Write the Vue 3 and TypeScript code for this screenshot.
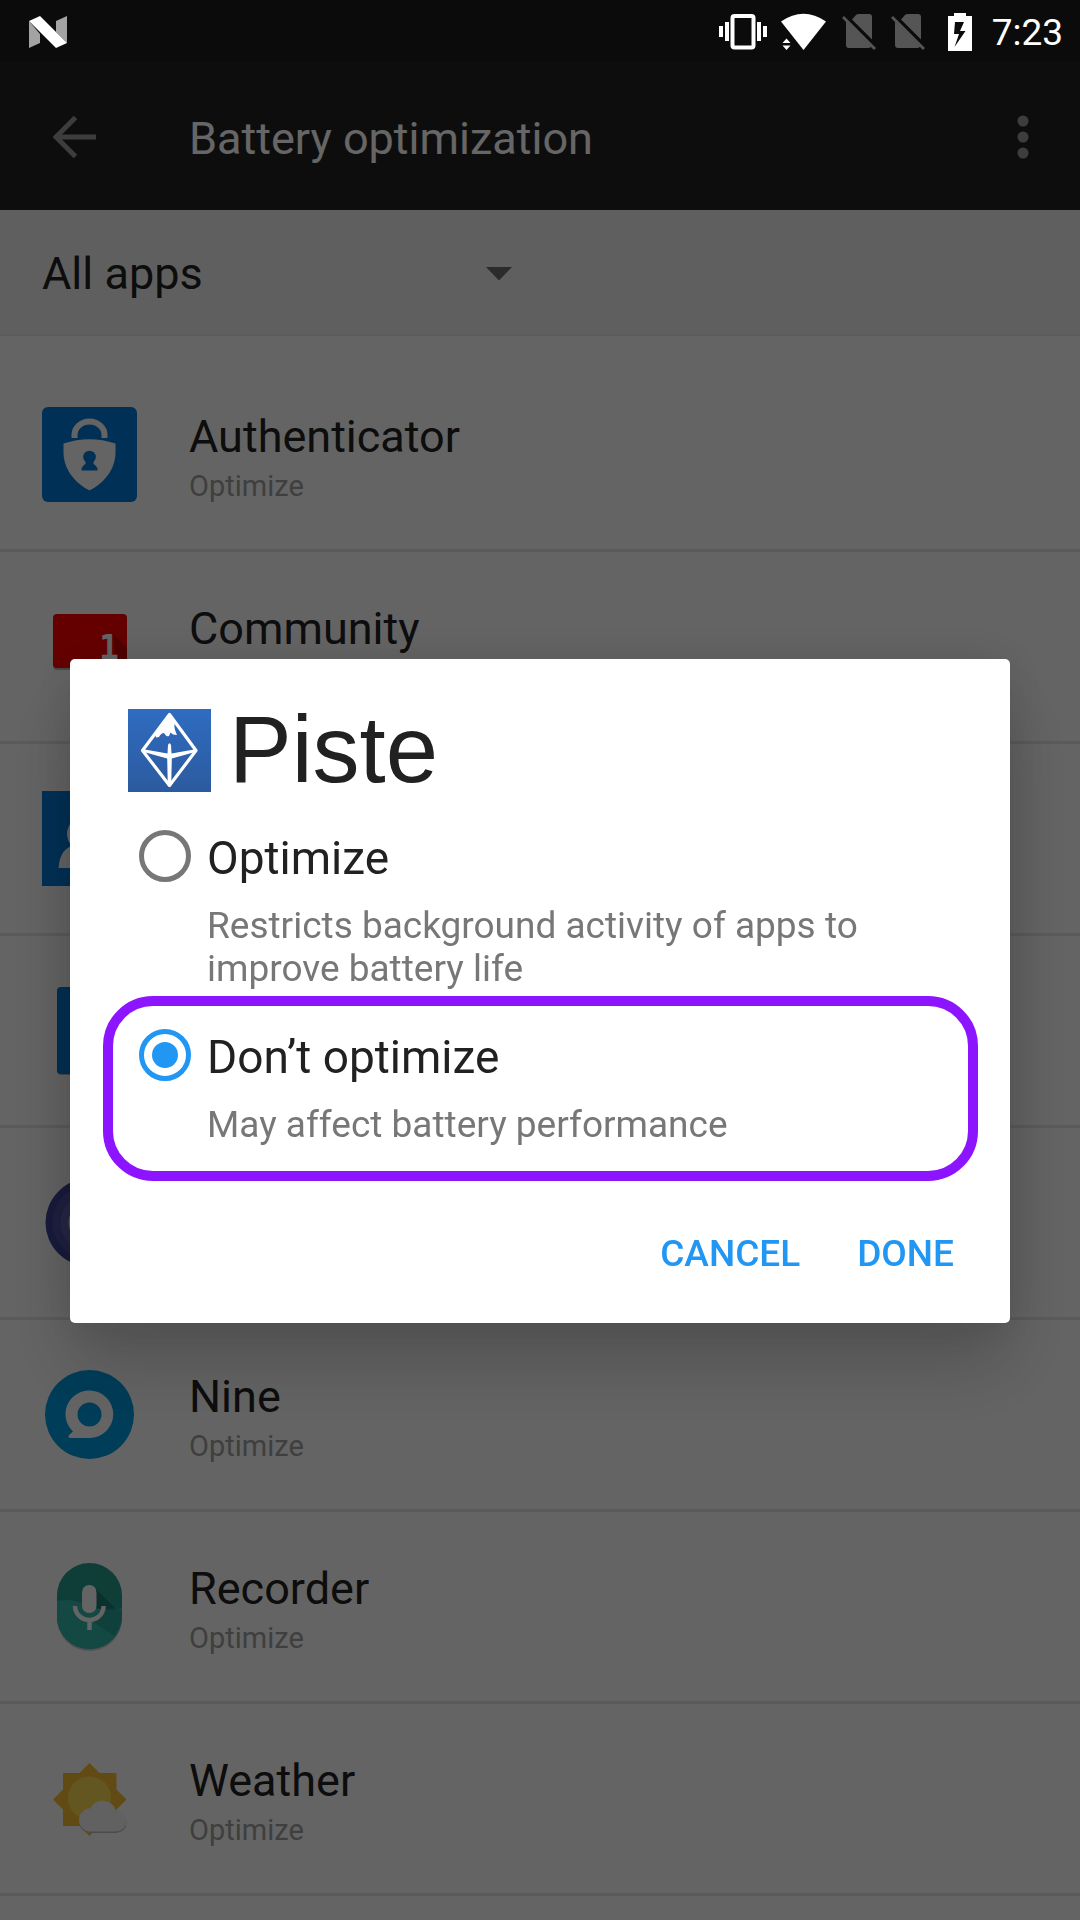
<script setup lang="ts">
import { ref } from 'vue'

interface AppRow {
  icon: string
  name?: string
  status?: string
}

interface Choice {
  value: string
  label: string
  description: string
  highlighted: boolean
}

const apps: AppRow[] = [
  { icon: 'authenticator', name: 'Authenticator', status: 'Optimize' },
  { icon: 'community', name: 'Community' },
  { icon: 'contacts' },
  { icon: 'document' },
  { icon: 'lens' },
  { icon: 'nine', name: 'Nine', status: 'Optimize' },
  { icon: 'recorder', name: 'Recorder', status: 'Optimize' },
  { icon: 'weather', name: 'Weather', status: 'Optimize' },
]

const choices: Choice[] = [
  {
    value: 'optimize',
    label: 'Optimize',
    description: 'Restricts background activity of apps to improve battery life',
    highlighted: false,
  },
  {
    value: 'dont-optimize',
    label: 'Don’t optimize',
    description: 'May affect battery performance',
    highlighted: true,
  },
]

const filter = ref('all')
const selected = ref('dont-optimize')
</script>

<template>
  <div class="screen">
    <div class="status-bar">
      <svg class="nougat" width="40" height="34" viewBox="0 0 40 34" aria-hidden="true">
        <path d="M1 6L12 19V28L1 33Z" fill="#a3a3a3" />
        <path d="M39 1V28L28 17V6Z" fill="#a3a3a3" />
        <path d="M1 6L12 1L39 28L28 33Z" fill="#fff" />
      </svg>
      <div class="status-icons">
        <svg width="48" height="38" viewBox="0 0 48 38" aria-hidden="true">
          <rect x="13.5" y="3" width="21" height="31.5" rx="2" fill="none" stroke="#fff" stroke-width="4" />
          <path d="M0 13h4v11H0zM6 9h4v19H6zM38 9h4v19h-4zM44 13h4v11h-4z" fill="#fff" />
        </svg>
        <svg class="wifi" width="46" height="38" viewBox="0 0 46 38" aria-hidden="true">
          <path d="M0 8.5Q22.5 -7 45 8.5L22.5 37Z" fill="#fff" />
          <path d="M1.5 30L5.5 25.5L9.5 30ZM1.5 32.5L5.5 37L9.5 32.5Z" fill="#fff" />
        </svg>
        <svg v-for="n in 2" :key="n" class="sim" width="34" height="38" viewBox="0 0 34 38" aria-hidden="true">
          <path d="M10 6.5L14 2Q15 1 17 1H27Q30 1 30 4V26.5ZM4 8L29 33.5Q28.5 35 26 35H7Q4 35 4 32Z" fill="#555" />
          <path d="M1 4L33 36" stroke="#555" stroke-width="3" />
        </svg>
        <svg class="battery" width="24" height="38" viewBox="0 0 24 38" aria-hidden="true">
          <path
            d="M6 0H18V3H24V38H0V3H6ZM7 9L6 21H11L6.5 34L17.5 18H12L16 9Z"
            fill="#fff"
            fill-rule="evenodd"
          />
        </svg>
        <time class="clock">7:23</time>
      </div>
    </div>

    <header class="toolbar">
      <button class="icon-button" type="button" aria-label="Back">
        <svg width="44" height="42" viewBox="0 0 44 42" aria-hidden="true">
          <path d="M43 21H4M22.5 1.5L3 21L22.5 40.5" fill="none" stroke="#999" stroke-width="5" />
        </svg>
      </button>
      <h1 class="toolbar-title">Battery optimization</h1>
      <button class="icon-button" type="button" aria-label="More options">
        <svg width="12" height="44" viewBox="0 0 12 44" aria-hidden="true">
          <circle cx="6" cy="6" r="5.5" fill="#999" />
          <circle cx="6" cy="22" r="5.5" fill="#999" />
          <circle cx="6" cy="38" r="5.5" fill="#999" />
        </svg>
      </button>
    </header>

    <div class="filter-bar">
      <div class="filter">
        <select v-model="filter" class="filter-select" aria-label="Apps shown">
          <option value="all">All apps</option>
        </select>
        <svg class="filter-caret" width="26" height="14" viewBox="0 0 26 14" aria-hidden="true">
          <path d="M0 0H26L13 13.5Z" fill="#6c6c6c" />
        </svg>
      </div>
    </div>

    <ul class="apps">
      <li v-for="app in apps" :key="app.icon" class="app">
        <svg class="app-icon" viewBox="0 0 95 95" aria-hidden="true">
          <g v-if="app.icon === 'authenticator'">
            <rect width="95" height="95" rx="6" fill="#0078d7" />
            <path d="M32.5 31V28A15 13.5 0 0 1 62.5 28V31" fill="none" stroke="#fafafa" stroke-width="6" />
            <path d="M21.5 36.5Q47.5 28 73.5 36.5V46C73 63 62 76 47.5 83.5C33 76 22 63 21.5 46Z" fill="#fafafa" />
            <circle cx="47.5" cy="50" r="6.3" fill="#0078d7" />
            <path d="M44 54H51Q51 57 53.5 58.5Q55.5 60 55.5 63.5H39.5Q39.5 60 41.5 58.5Q44 57 44 54Z" fill="#0078d7" />
          </g>
          <g v-else-if="app.icon === 'community'">
            <rect x="11" y="17" width="74" height="54" rx="4" fill="#b4b4b4" />
            <rect x="11" y="15" width="74" height="54" rx="4" fill="#fa0000" />
            <path d="M71 35L85 49V69H75Z" fill="#c40000" />
            <text x="57" y="60" class="one">1</text>
          </g>
          <g v-else-if="app.icon === 'contacts'">
            <rect width="95" height="95" fill="#0078d7" />
            <circle cx="42" cy="43" r="17" fill="#fafafa" />
            <path d="M16.5 77Q18 56 34 54H50Q66 56 68 77Z" fill="#fafafa" />
          </g>
          <g v-else-if="app.icon === 'document'">
            <rect x="15" y="5" width="65" height="87" rx="4" fill="#b4b4b4" />
            <rect x="15" y="4" width="65" height="87" rx="4" fill="#0078d0" />
          </g>
          <g v-else-if="app.icon === 'lens'">
            <circle cx="47.5" cy="47.5" r="44" fill="#3c4296" />
            <circle cx="47.5" cy="47.5" r="37" fill="#4a50a0" />
            <circle cx="47.5" cy="47.5" r="29" fill="#5c61ab" />
            <circle cx="47.5" cy="47.5" r="21" fill="#ddd" />
          </g>
          <g v-else-if="app.icon === 'nine'">
            <circle cx="47.5" cy="47.5" r="44.5" fill="#0098dc" />
            <path
              d="M47.5 23.5A23.7 23.7 0 0 1 47.5 71H28.5Q25.5 70.5 27 68L31 64.5A23.7 23.7 0 0 1 47.5 23.5Z"
              fill="#fafafa"
            />
            <circle cx="47.5" cy="47.5" r="12" fill="#0098dc" />
          </g>
          <g v-else-if="app.icon === 'recorder'">
            <rect x="15" y="5" width="65" height="87" rx="32.5" fill="#c8c8c8" />
            <rect x="15" y="4" width="65" height="86" rx="32.5" fill="#269b8e" />
            <path d="M15 42Q28 39 42 45Q60 54 80 49V57.5A32.5 32.5 0 0 1 15 57.5Z" fill="#30b5a8" />
            <path d="M54 30L73 49Q64 51 54 49Z" fill="#1b7a70" />
            <path d="M60 49H73L80 52Q80 66 72 77L50 62Z" fill="#1e8278" opacity="0.4" />
            <rect x="40" y="26" width="14.5" height="28" rx="7.2" fill="#fafafa" />
            <path d="M33 47A14.3 14 0 0 0 61.6 47M47.5 61V71" fill="none" stroke="#fafafa" stroke-width="4.5" />
          </g>
          <g v-else>
            <path
              d="M47.5 12L57.5 22H74.5V38.5L84.5 48.5L74.5 58.5V75H57.5L47.5 85L37.5 75H21V58.5L11 48.5L21 38.5V22H37.5Z"
              fill="#f5ba35"
            />
            <circle cx="47.5" cy="47" r="21.5" fill="#fad850" />
            <path
              d="M49 82A11.500 11.5 0 0 1 48 59A14 14 0 0 1 74 61A10.5 10.5 0 0 1 74 82Z"
              fill="#bdbdbd"
            />
            <path
              d="M49 80.5A11.5 11.5 0 0 1 48 57.5A14 14 0 0 1 74 59.5A10.5 10.5 0 0 1 74 80.5Z"
              fill="#f2f2f2"
            />
          </g>
        </svg>
        <div v-if="app.name" class="app-text">
          <div class="app-name">{{ app.name }}</div>
          <div v-if="app.status" class="app-status">{{ app.status }}</div>
        </div>
      </li>
    </ul>

    <div class="overlay">
      <form class="dialog" role="dialog" aria-labelledby="dialog-title" @submit.prevent>
        <div class="dialog-header">
          <svg class="dialog-icon" viewBox="0 0 83 83" aria-hidden="true">
            <defs>
              <linearGradient id="sky" x1="0" y1="0" x2="0" y2="1">
                <stop offset="0" stop-color="#2f6cc0" />
                <stop offset="1" stop-color="#2c5a9f" />
              </linearGradient>
            </defs>
            <rect width="83" height="83" fill="url(#sky)" />
            <path
              d="M41.5 5.5L68 41.5L41.5 76.5L14.5 41.5Z"
              fill="none"
              stroke="#fff"
              stroke-linejoin="round"
              stroke-width="3.2"
            />
            <path
              d="M14 40L39.5 44.5L40 36Q41.5 32.5 43 36L43.5 44.5L69 40V42.5L43.8 49.5L43.2 77H39.8L39.2 49.5L14 42.5Z"
              fill="#fff"
            />
            <path
              d="M41.5 4L49 14L46.5 15Q46 20 49 26L45 25.5L42.5 23.5L41 27Q39 28 37.5 26L36 24Q33 24 31 28L28 28.5L27 25L32 16Z"
              fill="#fff"
            />
          </svg>
          <h2 id="dialog-title" class="dialog-title">Piste</h2>
        </div>

        <div class="choices" role="radiogroup" aria-labelledby="dialog-title">
          <label
            v-for="choice in choices"
            :key="choice.value"
            class="choice"
            :class="{ highlighted: choice.highlighted }"
          >
            <input v-model="selected" class="radio" type="radio" name="mode" :value="choice.value" />
            <span class="choice-text">
              <span class="choice-label">{{ choice.label }}</span>
              <span class="choice-description">{{ choice.description }}</span>
            </span>
          </label>
        </div>

        <div class="actions">
          <button class="action" type="button">CANCEL</button>
          <button class="action" type="submit">DONE</button>
        </div>
      </form>
    </div>
  </div>
</template>

<style>
body {
  background: #646464;
}
</style>

<style scoped>
.screen {
  position: relative;
  min-height: 100vh;
  background: #fafafa;
  color: #212121;
  font-family: Roboto, 'Liberation Sans', sans-serif;
}

/* The status bar stays lit above the dimmed page. */
.status-bar {
  position: relative;
  z-index: 2;
  display: flex;
  align-items: flex-start;
  justify-content: space-between;
  box-sizing: border-box;
  height: 62px;
  padding: 13px 17px 0 28px;
  background: #0b0b0b;
  color: #fff;
}

.nougat {
  margin-top: 2px;
}

.status-icons {
  display: flex;
  align-items: flex-start;
}

.wifi {
  margin-left: 14px;
}

.sim {
  margin-left: 15px;
}

.battery {
  margin-left: 23px;
}

.clock {
  margin-left: 20px;
  font-size: 37px;
  line-height: 40px;
}

.toolbar {
  display: flex;
  align-items: center;
  box-sizing: border-box;
  height: 148px;
  padding: 2px 51px 0 53px;
  background: #212121;
  color: #fff;
}

.icon-button {
  display: flex;
  padding: 0;
  border: 0;
  background: none;
}

.toolbar-title {
  flex: 1;
  margin: 0 0 0 92px;
  padding-top: 3px;
  font-size: 45px;
  font-weight: 400;
  line-height: 56px;
}

.filter-bar {
  box-sizing: border-box;
  height: 126px;
  padding: 32px 42px;
  border-bottom: 2px solid #e4e4e4;
  background: #eeeeee;
}

.filter {
  position: relative;
  width: 50%;
}

.filter-select {
  display: block;
  box-sizing: border-box;
  width: 100%;
  height: 64px;
  padding: 0;
  border: 0;
  appearance: none;
  background: none;
  color: #212121;
  font-family: inherit;
  font-size: 45px;
  line-height: 64px;
}

.filter-caret {
  position: absolute;
  top: 25px;
  right: 28px;
}

.apps {
  margin: 0;
  padding: 24px 0 0;
  list-style: none;
}

.app {
  display: flex;
  gap: 52px;
  padding: 47px 42px;
  border-bottom: 3px solid #e2e2e2;
}

.app-icon {
  flex: none;
  width: 95px;
  height: 95px;
}

.one {
  fill: #fafafa;
  font-family: 'DejaVu Sans Mono', monospace;
  font-size: 33px;
  font-weight: 700;
}

.app-name {
  font-size: 45px;
  line-height: 60px;
}

.app-status {
  margin-top: 3px;
  color: #9e9e9e;
  font-size: 29px;
  line-height: 32px;
}

.overlay {
  position: fixed;
  inset: 0;
  z-index: 1;
  display: flex;
  align-items: center;
  padding: 62px 70px 0;
  background: rgba(0, 0, 0, 0.6);
}

.dialog {
  flex: 1;
  padding: 50px 56px 47px 58px;
  border-radius: 5px;
  background: #fff;
  box-shadow: 0 44px 72px rgba(0, 0, 0, 0.18), 0 0 48px rgba(0, 0, 0, 0.12);
}

.dialog-header {
  display: flex;
  gap: 18px;
}

.dialog-icon {
  width: 83px;
  height: 83px;
}

.dialog-title {
  margin: 0;
  font-family: 'Liberation Sans', Arial, sans-serif;
  font-size: 94px;
  font-weight: 400;
  line-height: 82px;
}

.choices {
  display: flex;
  flex-direction: column;
  gap: 39px;
  padding: 38px 0 0 11px;
}

.choice {
  position: relative;
  display: flex;
  align-items: flex-start;
  gap: 16px;
}

.choice.highlighted::after {
  content: '';
  position: absolute;
  inset: -33px -24px -35px -36px;
  border: 10px solid #8d14ff;
  border-radius: 50px;
  pointer-events: none;
}

.radio {
  display: grid;
  flex: none;
  place-items: center;
  box-sizing: border-box;
  width: 52px;
  height: 52px;
  margin: 0;
  border: 5px solid #777;
  border-radius: 50%;
  appearance: none;
}

.radio:checked {
  border-color: #2196f3;
}

.radio:checked::before {
  content: '';
  width: 26px;
  height: 26px;
  border-radius: 50%;
  background: #2196f3;
}

.choice-text {
  display: flex;
  flex-direction: column;
  gap: 18px;
}

.choice-label {
  font-size: 46px;
  line-height: 56px;
}

.choice-description {
  color: #777;
  font-size: 37px;
  line-height: 43px;
}

.actions {
  display: flex;
  justify-content: flex-end;
  gap: 57px;
  margin-top: 86px;
}

.action {
  padding: 0;
  border: 0;
  background: none;
  color: #2196f3;
  font-family: inherit;
  font-size: 37px;
  font-weight: 500;
  line-height: 44px;
}
</style>
